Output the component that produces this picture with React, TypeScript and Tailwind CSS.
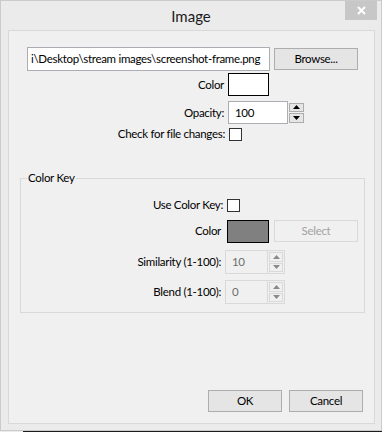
import React from 'react';

function SpinArrow({ up, color }: { up: boolean; color: string }) {
  return (
    <svg width="7" height="4" viewBox="0 0 7 4">
      <polygon points={up ? '0,4 7,4 3.5,0' : '0,0 7,0 3.5,4'} fill={color} />
    </svg>
  );
}

function Checkbox() {
  return <div className="w-[13px] h-[13px] border border-[#333] bg-white" />;
}

function DisabledSpin({ value }: { value: string }) {
  return (
    <div className="flex w-[60px] h-[24px] border border-[#d9d9d9] bg-[#f0f0f0]">
      <div className="flex-1 pl-[6px] pt-[3px] text-[#6d6d6d]">{value}</div>
      <div className="w-[17px] flex flex-col gap-[1px] p-[1px] border-l border-[#d9d9d9]">
        <div className="flex-1 flex items-center justify-center border border-[#d9d9d9] bg-[#f0f0f0]">
          <SpinArrow up color="#8a8a8a" />
        </div>
        <div className="flex-1 flex items-center justify-center border border-[#d9d9d9] bg-[#f0f0f0]">
          <SpinArrow up={false} color="#8a8a8a" />
        </div>
      </div>
    </div>
  );
}

export default function App() {
  return (
    <div className="w-[382px] h-[432px] flex flex-col bg-[#1c1c1c] text-[11.5px] tracking-[-0.3px] leading-[16px] text-black font-['Lato',sans-serif]">
      <div className="h-[431px] flex flex-col border border-[#cbcbcb] bg-[#ebebeb]">
        {/* Title bar */}
        <div className="h-[29px] grid grid-cols-[1fr_auto_1fr]">
          <div />
          <div className="pt-[5px] text-[15px] tracking-normal leading-[20px] text-[#1a1a1a]">Image</div>
          <div className="flex justify-end pr-[4px]">
            <div className="w-[32px] h-[19px] bg-[#c7c7c7] flex items-center justify-center">
              <svg width="9" height="9" viewBox="0 0 9 9">
                <path d="M1 1 L8 8 M8 1 L1 8" stroke="#fff" strokeWidth="2" />
              </svg>
            </div>
          </div>
        </div>

        {/* Content panel */}
        <div className="flex-1 ml-[7px] mr-[6px] mb-[6px] flex flex-col border border-[#d9d9d9] bg-[#f0f0f0]">
          {/* File path */}
          <div className="mt-[16px] pl-[18px] flex items-center gap-[4px]">
            <div className="w-[243px] h-[24px] border border-[#abadb3] bg-white flex items-center overflow-hidden pl-[3px]">
              <span className="whitespace-nowrap">i\Desktop\stream images\screenshot-frame.png</span>
            </div>
            <button className="w-[84px] h-[22px] border border-[#adadad] bg-[#e5e5e5] text-center">Browse...</button>
          </div>

          {/* Color */}
          <div className="mt-[2px] flex items-center gap-[4px] h-[23px]">
            <div className="w-[215px] text-right">Color</div>
            <div className="w-[41px] h-[23px] border border-black bg-white" />
          </div>

          {/* Opacity */}
          <div className="mt-[5px] flex items-center h-[23px]">
            <div className="w-[215px] text-right mr-[4px]">Opacity:</div>
            <div className="w-[60px] h-[23px] border border-[#abadb3] bg-white pl-[6px] pt-[3px]">100</div>
            <div className="ml-[1px] w-[15px] h-[20px] flex flex-col gap-[1px]">
              <div className="flex-1 flex items-center justify-center border border-[#adadad] bg-[#e5e5e5]">
                <SpinArrow up color="#000" />
              </div>
              <div className="flex-1 flex items-center justify-center border border-[#adadad] bg-[#e5e5e5]">
                <SpinArrow up={false} color="#000" />
              </div>
            </div>
          </div>

          {/* Check for changes */}
          <div className="mt-[3px] flex items-center gap-[4px] h-[14px]">
            <div className="w-[216px] text-right">Check for file changes:</div>
            <Checkbox />
          </div>

          {/* Color Key group */}
          <fieldset className="mt-[29px] ml-[11px] mr-[9px] border border-[#d9d9d9] pt-[12px] pb-[8px]">
            <legend className="ml-[6px] px-[1px] leading-[16px]">Color Key</legend>

            <div className="flex items-center gap-[4px] h-[14px]">
              <div className="w-[202px] text-right">Use Color Key:</div>
              <Checkbox />
            </div>

            <div className="mt-[7px] flex items-center h-[24px]">
              <div className="w-[200px] text-right mr-[6px]">Color</div>
              <div className="w-[42px] h-[23px] border border-black bg-[#808080]" />
              <button className="ml-[5px] w-[84px] h-[22px] border border-[#d9d9d9] bg-[#f0f0f0] text-[#a3a3a3]">Select</button>
            </div>

            <div className="mt-[7px] flex items-center gap-[4px] h-[24px]">
              <div className="w-[200px] text-right">Similarity (1-100):</div>
              <DisabledSpin value="10" />
            </div>

            <div className="mt-[6px] flex items-center gap-[4px] h-[24px]">
              <div className="w-[200px] text-right">Blend (1-100):</div>
              <DisabledSpin value="0" />
            </div>
          </fieldset>

          <div className="flex-1" />

          {/* Buttons */}
          <div className="flex justify-end gap-[7px] pr-[11px] pb-[11px]">
            <button className="w-[74px] h-[22px] border border-[#adadad] bg-[#e5e5e5]">OK</button>
            <button className="w-[74px] h-[22px] border border-[#adadad] bg-[#e5e5e5]">Cancel</button>
          </div>
        </div>
      </div>
      <div className="h-[1px] flex">
        <div className="w-[23px] bg-[#ebebeb]" />
        <div className="flex-1" />
      </div>
    </div>
  );
}
